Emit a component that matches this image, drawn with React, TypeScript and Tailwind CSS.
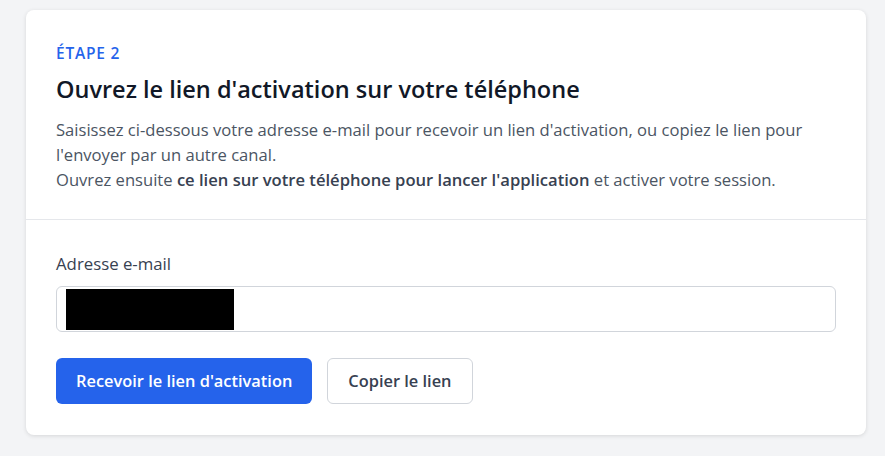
export default function App() {
  return (
    <div
      className="min-h-screen bg-[#f3f4f6] pt-[10px] pl-[26px]"
      style={{ fontFamily: '"Open Sans", "Noto Sans", sans-serif' }}
    >
      <div className="w-[840px] rounded-lg bg-white shadow-[0_1px_4px_rgba(0,0,0,0.12)]">
        <div className="border-b border-[#e5e7eb] px-[30px] pt-[33px] pb-[27px]">
          <p className="text-[15.5px] font-semibold uppercase tracking-[0.05em] text-[#2563eb] leading-[20px]">
            Étape 2
          </p>
          <h2 className="mt-[10px] text-[23.5px] font-semibold leading-[32px] text-[#111827]">
            Ouvrez le lien d'activation sur votre téléphone
          </h2>
          <p className="mt-[12px] text-[16.6px] leading-[25px] text-[#4b5563]">
            Saisissez ci-dessous votre adresse e-mail pour recevoir un lien d'activation, ou copiez le lien pour
            l'envoyer par un autre canal.
            <br />
            Ouvrez ensuite{' '}
            <span className="font-semibold text-[#374151]">ce lien sur votre téléphone pour lancer l'application</span>{' '}
            et activer votre session.
          </p>
        </div>

        <div className="px-[30px] pt-[32px] pb-[31px]">
          <label className="block text-[16.8px] font-medium leading-[24px] text-[#374151]">Adresse e-mail</label>
          <div className="relative mt-[10px]">
            <input
              type="email"
              className="h-[46px] w-full rounded-md border border-[#d1d5db] bg-white px-3 text-[16px] outline-none"
            />
            <div className="absolute left-[10px] top-[3px] h-[41px] w-[168px] bg-black" />
          </div>
          <div className="mt-[26px] flex gap-[15px]">
            <button className="h-[46px] rounded-md bg-[#2563eb] px-[20px] text-[16.4px] font-semibold text-white">
              Recevoir le lien d'activation
            </button>
            <button className="h-[46px] rounded-md border border-[#d1d5db] bg-white px-[20px] text-[16.4px] font-semibold text-[#374151]">
              Copier le lien
            </button>
          </div>
        </div>
      </div>
    </div>
  );
}
